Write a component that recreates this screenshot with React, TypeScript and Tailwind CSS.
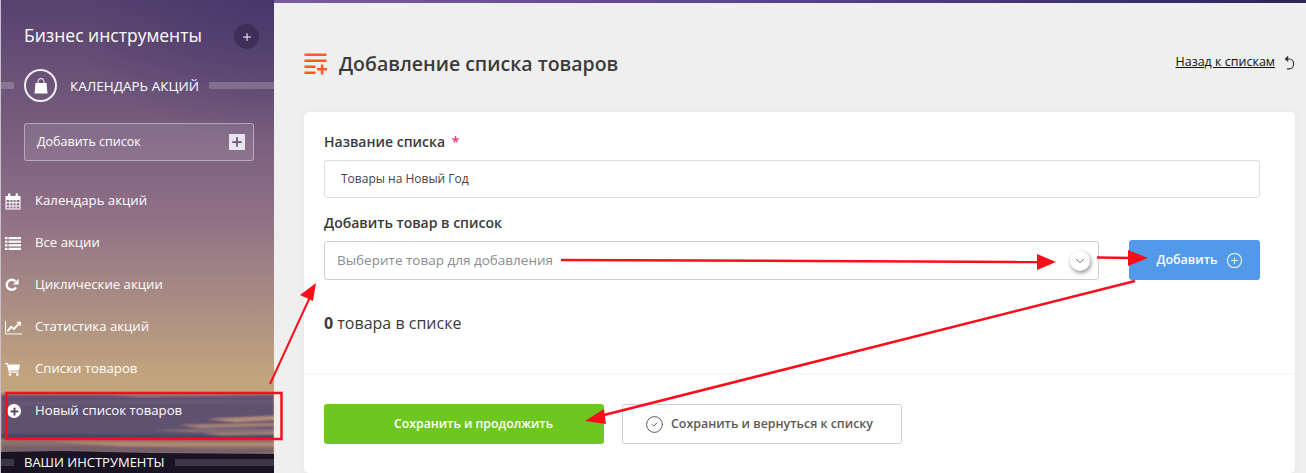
import React from 'react';
import { Plus, ChevronDown, CirclePlus, CircleCheck } from 'lucide-react';

const CalendarIcon = () => (
  <svg width="16" height="17" viewBox="0 0 16 17" fill="white">
    <path d="M0.5 3 H3 V1.5 a1 1 0 0 1 2.4 0 V3 H10.6 V1.5 a1 1 0 0 1 2.4 0 V3 H15.5 V16.5 H0.5 Z M1.6 7 V9.2 H4.4 V7 Z M5.4 7 V9.2 H7.5 V7 Z M8.5 7 V9.2 H10.6 V7 Z M11.6 7 V9.2 H14.4 V7 Z M1.6 10.2 V12.4 H4.4 V10.2 Z M5.4 10.2 V12.4 H7.5 V10.2 Z M8.5 10.2 V12.4 H10.6 V10.2 Z M11.6 10.2 V12.4 H14.4 V10.2 Z M1.6 13.4 V15.4 H4.4 V13.4 Z M5.4 13.4 V15.4 H7.5 V13.4 Z M8.5 13.4 V15.4 H10.6 V13.4 Z M11.6 13.4 V15.4 H14.4 V13.4 Z" fillRule="evenodd" />
  </svg>
);

const ListIcon = () => (
  <svg width="16" height="13" viewBox="0 0 16 13" fill="white">
    <rect x="0" y="0" width="2.5" height="2.2" /><rect x="3.5" y="0" width="12.5" height="2.2" />
    <rect x="0" y="3.6" width="2.5" height="2.2" /><rect x="3.5" y="3.6" width="12.5" height="2.2" />
    <rect x="0" y="7.2" width="2.5" height="2.2" /><rect x="3.5" y="7.2" width="12.5" height="2.2" />
    <rect x="0" y="10.8" width="2.5" height="2.2" /><rect x="3.5" y="10.8" width="12.5" height="2.2" />
  </svg>
);

const ReloadIcon = () => (
  <svg width="14" height="14" viewBox="0 0 14 14" fill="none">
    <path d="M11 9.3 A5 5 0 1 1 10.4 3.4" stroke="white" strokeWidth="2.3" />
    <path d="M13.6 0.8 V6.4 H8 Z" fill="white" />
  </svg>
);

const ChartIcon = () => (
  <svg width="18" height="15" viewBox="0 0 18 15" fill="none" stroke="white">
    <path d="M0.5 0.5 V14.3 H18" strokeWidth="1" />
    <path d="M2.5 11.5 L6.5 6.8 L9.5 9 L15 3.2" strokeWidth="2" />
    <path d="M12 1.5 H17 V6.5 Z" fill="white" stroke="none" />
  </svg>
);

const CartIcon = () => (
  <svg width="15" height="13" viewBox="0 0 15 13" fill="white">
    <path d="M0 0 H2.8 L3.3 1.6 H15 L13.8 7.4 H4.8 L5 8.6 H13.6 V9.8 H3.9 L1.9 1.3 H0 Z" />
    <circle cx="5" cy="11.6" r="1.3" />
    <circle cx="12.4" cy="11.6" r="1.3" />
  </svg>
);

const menu = [
  { label: 'Календарь акций', icon: <CalendarIcon /> },
  { label: 'Все акции', icon: <ListIcon /> },
  { label: 'Циклические акции', icon: <ReloadIcon /> },
  { label: 'Статистика акций', icon: <ChartIcon /> },
  { label: 'Списки товаров', icon: <CartIcon /> },
];

function SkyDecor() {
  return (
    <svg className="absolute inset-0 w-full h-full" viewBox="0 0 273 473" preserveAspectRatio="none">
      <defs>
        <filter id="blur1"><feGaussianBlur stdDeviation="0.8" /></filter>
        <radialGradient id="corner" cx="1" cy="0" r="0.75">
          <stop offset="0" stopColor="#3d2e68" stopOpacity="0.6" />
          <stop offset="1" stopColor="#3d2e68" stopOpacity="0" />
        </radialGradient>
      </defs>
      <rect x="0" y="0" width="273" height="190" fill="url(#corner)" />
      <g filter="url(#blur1)">
        <path d="M0 395 L273 394 L273 440 L0 440 Z" fill="#5f5170" />
        <path d="M0 395 L90 394 L140 397 L273 395 L273 393 L0 393 Z" fill="#8f7c7e" />
        <path d="M0 402 L273 400 L273 403 L0 405 Z" fill="#6b5a76" />
        <path d="M205 419 L273 416 L273 420 L235 422 Z" fill="#b8927a" />
        <path d="M178 425 L273 423 L273 426 L200 428 Z" fill="#a88778" />
        <path d="M150 430 L273 429 L273 431 L190 432 Z" fill="#94797a" />
        <path d="M200 433 L273 432 L273 434 L220 435 Z" fill="#b18f7c" />
        <path d="M0 434 L273 436 L273 438 L0 438 Z" fill="#4d3f5c" />
      </g>
      <g filter="url(#blur1)">
        <path d="M0 440 L273 440 L273 456 L0 456 Z" fill="#8a6f6b" />
        <path d="M50 442 L273 443 L273 446 L120 446 Z" fill="#b78d72" />
        <path d="M0 446 L90 445 L200 449 L273 449 L273 453 L0 453 Z" fill="#77606a" />
      </g>
      <path d="M0 452 L60 451 L150 453 L273 454 L273 473 L0 473 Z" fill="#191424" />
    </svg>
  );
}

function Arrows() {
  const red = '#fc0d1b';
  return (
    <svg className="absolute inset-0 pointer-events-none" width="1306" height="473" viewBox="0 0 1306 473">
      <rect x="6.5" y="393" width="275" height="46" fill="none" stroke={red} strokeWidth="2.5" />
      <line x1="270" y1="384" x2="310" y2="297" stroke={red} strokeWidth="2" />
      <polygon points="316,283 300,295 313,301" fill={red} />
      <line x1="561" y1="260" x2="1040" y2="262" stroke={red} strokeWidth="2.5" />
      <polygon points="1056,262 1037,254 1037,270" fill={red} />
      <line x1="1097" y1="257.5" x2="1132" y2="258" stroke={red} strokeWidth="2.5" />
      <polygon points="1148,258 1128,250 1128,266" fill={red} />
      <line x1="1135" y1="281" x2="600" y2="416" stroke={red} strokeWidth="2.5" />
      <polygon points="585,421 604,409 606,424" fill={red} />
    </svg>
  );
}

export default function App() {
  return (
    <div className="relative flex w-[1306px] h-[473px] overflow-hidden bg-[#efefef] font-['Open_Sans',sans-serif]">
      <aside className="relative w-[274px] h-full shrink-0 border-l border-[#c9bfc9] bg-gradient-to-b from-[#57426f] via-[#8e6f86] via-45% to-[#c2a57d] to-80% text-white overflow-hidden">
        <SkyDecor />
        <div className="relative flex flex-col h-full">
          <div className="flex items-center justify-between pl-[23px] pr-[15px] pt-[21px]">
            <span className="text-[17.5px] leading-[28px]">Бизнес инструменты</span>
            <span className="flex items-center justify-center w-[25px] h-[25px] mt-[3px] rounded-full bg-[#3f2e58]">
              <Plus size={12} strokeWidth={2} />
            </span>
          </div>
          <div className="flex items-center mt-[20px] h-[33px]">
            <div className="w-[13px] h-[7px] bg-white/20" />
            <div className="flex items-center justify-center w-[33px] h-[33px] ml-[10px] rounded-full border-2 border-white/90">
              <svg width="14" height="16" viewBox="0 0 14 16" fill="white">
                <path d="M1.5 5 H12.5 L13.5 15.5 H0.5 Z" />
                <path d="M4 6 V3.5 a3 3 0 0 1 6 0 V6" fill="none" stroke="white" strokeWidth="1" />
              </svg>
            </div>
            <span className="ml-[13px] text-[13.5px] leading-[18px] whitespace-nowrap">КАЛЕНДАРЬ АКЦИЙ</span>
            <div className="flex-1 h-[7px] ml-[10px] bg-white/20" />
          </div>
          <div className="flex items-center justify-between ml-[23px] mt-[21px] h-[38px] w-[230px] pl-[12px] pr-[8px] rounded-[3px] border border-white/40 bg-white/10">
            <span className="text-[12.5px]">Добавить список</span>
            <span className="flex items-center justify-center w-4 h-4 rounded-[1px] bg-[#e9e5ee] text-[#6b5579]">
              <Plus size={14} strokeWidth={3} />
            </span>
          </div>
          <nav className="flex flex-col mt-[19px]">
            {menu.map((item) => (
              <div key={item.label} className="flex items-center h-[42px] pl-[4px]">
                <span className="flex items-center justify-start w-[17px] h-[17px]">{item.icon}</span>
                <span className="ml-[13px] text-[13.2px] whitespace-nowrap">{item.label}</span>
              </div>
            ))}
            <div className="flex items-center h-[42px] pl-[6px]">
              <span className="flex items-center justify-center w-[14px] h-[14px] rounded-full bg-white text-[#57496b]">
                <Plus size={11} strokeWidth={4} />
              </span>
              <span className="ml-[14px] text-[13.2px] whitespace-nowrap">Новый список товаров</span>
            </div>
          </nav>
          <div className="flex items-center mt-[22px] h-[16px]">
            <div className="w-[13px] h-[7px] bg-white/15" />
            <span className="ml-[10px] text-[13px] leading-[16px] whitespace-nowrap">ВАШИ ИНСТРУМЕНТЫ</span>
            <div className="flex-1 h-[7px] ml-[10px] bg-white/15" />
          </div>
        </div>
      </aside>

      <main className="flex-1 min-w-0 flex flex-col">
        <div className="h-[3px] bg-gradient-to-r from-[#7a5c9c] via-[#59418e] to-[#2e2658]" />
        <header className="flex items-center justify-between h-[109px] pt-[12px] pl-[30px] pr-[11px]">
          <div className="flex items-center">
            <svg width="24" height="22" viewBox="0 0 24 22" fill="#ff5a26">
              <rect x="0.5" y="0.5" width="22" height="2.5" />
              <rect x="0.5" y="6.5" width="22" height="2.5" />
              <rect x="0.5" y="12.5" width="11" height="2.5" />
              <rect x="0.5" y="18.5" width="11" height="2.5" />
              <rect x="13" y="15" width="10" height="2.5" />
              <rect x="16.8" y="11.5" width="2.5" height="10" />
            </svg>
            <h1 className="ml-[11px] text-[19.5px] font-semibold text-[#3b3b3b]">Добавление списка товаров</h1>
          </div>
          <div className="flex items-center gap-[9px] -mt-[2px]">
            <span className="text-[12.5px] text-[#111] underline">Назад к спискам</span>
            <svg width="11" height="15" viewBox="0 0 11 15" fill="none" stroke="#333" strokeWidth="1.2">
              <path d="M3 4 H5.5 A4 4.8 0 0 1 5.5 13.8 H3" />
              <path d="M4.2 0.5 L0.6 4 L4.2 7" fill="#333" stroke="none" />
            </svg>
          </div>
        </header>

        <section className="w-[991px] ml-[30px] flex-1 bg-white rounded-[5px] shadow-[0_0_8px_rgba(0,0,0,0.04)]">
          <div className="pl-5 pr-[35px] pt-[20px] h-[262px] border-b border-[#f5f5f5]">
            <div className="text-[14px] leading-[20px] font-semibold text-[#3a3a3a]">
              Название списка <span className="text-[#f5327f] ml-[3px]">*</span>
            </div>
            <div className="flex items-center h-[38px] mt-[8px] pl-[16px] rounded-[3px] border border-[#dddddd] text-[12px] text-[#444]">
              Товары на Новый Год
            </div>
            <div className="mt-[15px] text-[14px] leading-[20px] font-semibold text-[#3a3a3a]">Добавить товар в список</div>
            <div className="flex items-start mt-[7px]">
              <div className="flex items-center justify-between w-[775px] h-[39px] mt-[1px] pl-[12px] pr-[8px] rounded-[3px] border border-[#cfcfcf] text-[13.5px] text-[#8c8c8c]">
                Выберите товар для добавления
                <span className="flex items-center justify-center w-5 h-5 rounded-full bg-white shadow-[1px_2px_4px_rgba(0,0,0,0.45)] text-[#333]">
                  <ChevronDown size={14} strokeWidth={1.25} />
                </span>
              </div>
              <button className="flex items-center justify-center gap-[9px] w-[131px] h-[40px] ml-[30px] pl-[11px] rounded-[3px] bg-[#5299e9] text-white text-[12.4px] font-semibold">
                Добавить <CirclePlus size={17} strokeWidth={1.5} />
              </button>
            </div>
            <div className="mt-[33px] text-[16px] leading-[20px] text-[#3a3a3a]">
              <span className="font-bold">0</span> товара в списке
            </div>
          </div>
          <div className="flex items-center gap-[18px] px-5 pt-[30px]">
            <button className="w-[280px] h-[40px] pl-[19px] rounded-[3px] bg-[#6ec621] text-white text-[12.3px] font-semibold">
              Сохранить и продолжить
            </button>
            <button className="flex items-center justify-center gap-[7px] w-[280px] h-[40px] pr-[6px] rounded-[3px] border border-[#cfcfcf] text-[12.4px] font-semibold text-[#5a5a5a]">
              <CircleCheck size={19} strokeWidth={1.25} /> Сохранить и вернуться к списку
            </button>
          </div>
        </section>
      </main>

      <Arrows />
    </div>
  );
}
